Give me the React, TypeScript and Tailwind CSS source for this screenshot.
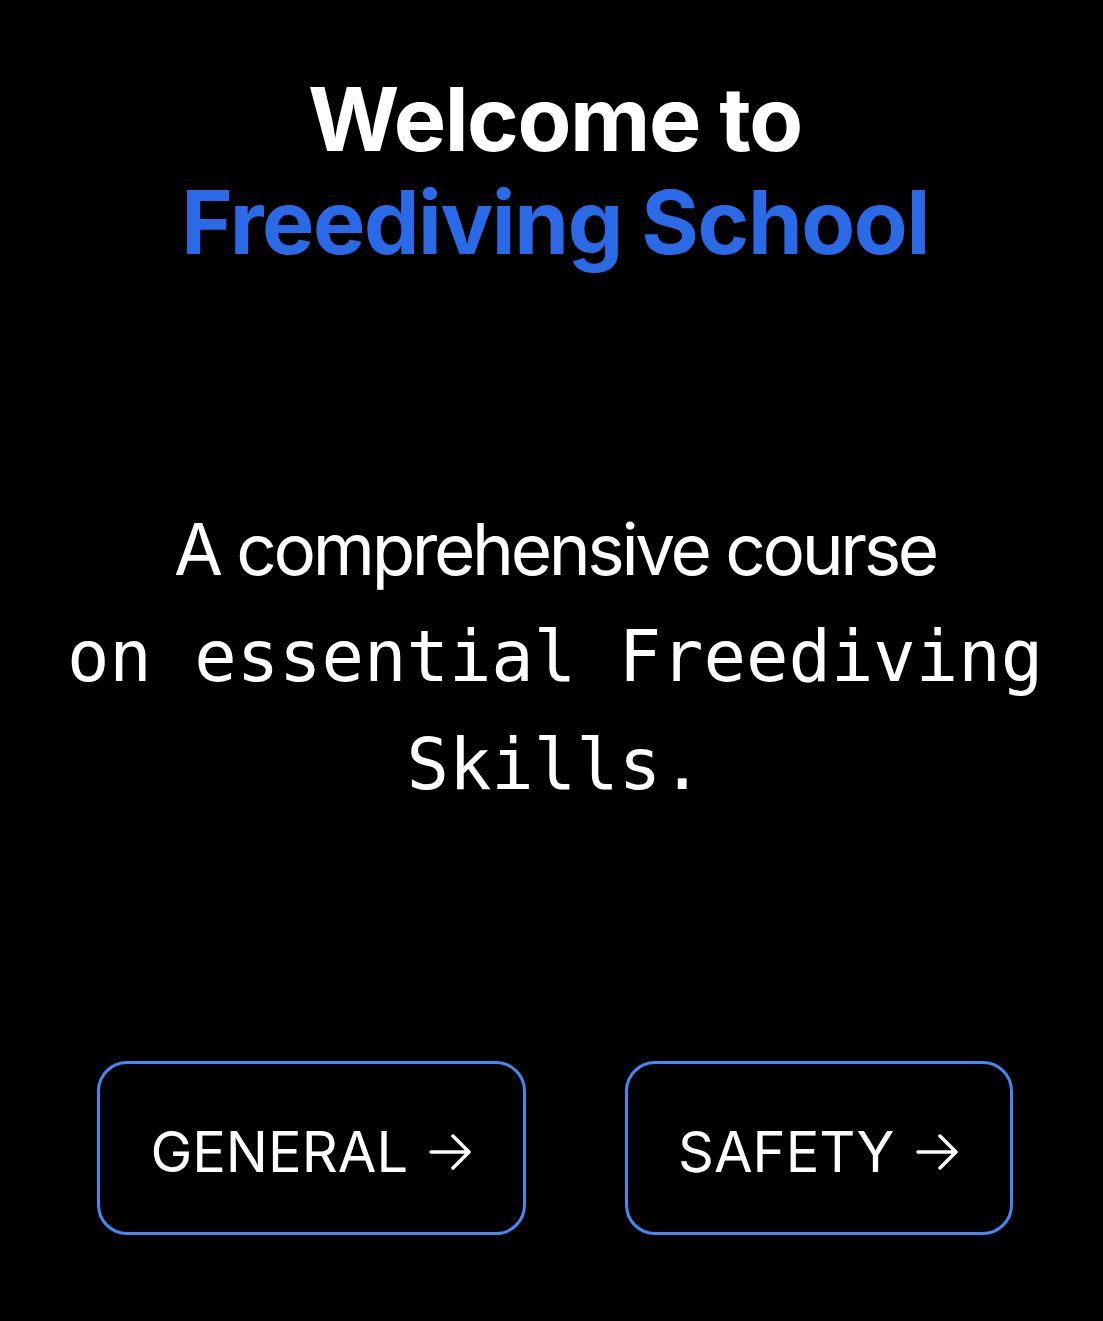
function Arrow() {
  return (
    <svg width="42" height="36" viewBox="0 0 42 36" fill="none" stroke="currentColor" strokeWidth="3.5" strokeLinecap="round" strokeLinejoin="round">
      <path d="M2 18H40M24 2L40 18L24 34" />
    </svg>
  );
}

function NavButton({ label }: { label: string }) {
  return (
    <button className="flex items-center gap-[21px] rounded-[30px] border-[3px] border-[#4687f3] pl-[50px] pr-[52px] pt-[60px] pb-[52px] text-[56px] leading-[56px] text-white">
      <span>{label}</span>
      <Arrow />
    </button>
  );
}

export default function App() {
  return (
    <div className="min-h-[1321px] bg-black font-['Inter',sans-serif] text-white">
      <div className="flex flex-col items-center pl-[47px] pr-[40px] pt-[68px]">
        <h1 className="text-center text-[88px] font-bold leading-[103px] tracking-[-0.016em]">
          Welcome to
          <br />
          <span className="text-[#2b6ae6]">Freediving School</span>
        </h1>

        <p className="mt-[222px] text-center text-[71px] leading-[106px]">
          <span className="tracking-[-0.047em]">A comprehensive course</span>
          <br />
          <span className="font-['DejaVu_Sans_Mono',monospace] text-[70.5px]">
            on essential Freediving Skills.
          </span>
        </p>

        <div className="mt-[243px] flex gap-[99px]">
          <NavButton label="GENERAL" />
          <NavButton label="SAFETY" />
        </div>
      </div>
    </div>
  );
}
